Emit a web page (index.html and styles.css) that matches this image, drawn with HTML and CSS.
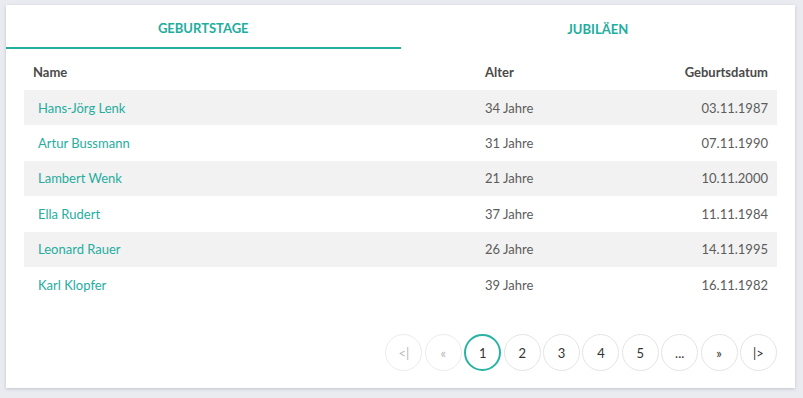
FILE: index.html
```html
<!DOCTYPE html>
<html lang="de">
<head>
<meta charset="utf-8">
<link rel="stylesheet" href="styles.css">
</head>
<body>
<div class="card">
  <div class="tabs">
    <div class="tab active">GEBURTSTAGE</div>
    <div class="tab">JUBILÄEN</div>
  </div>
  <div class="table">
    <div class="row head">
      <div class="c-name">Name</div>
      <div class="c-age">Alter</div>
      <div class="c-date">Geburtsdatum</div>
    </div>
    <div class="row odd"><div class="c-name link">Hans-Jörg Lenk</div><div class="c-age">34 Jahre</div><div class="c-date">03.11.1987</div></div>
    <div class="row"><div class="c-name link">Artur Bussmann</div><div class="c-age">31 Jahre</div><div class="c-date">07.11.1990</div></div>
    <div class="row odd"><div class="c-name link">Lambert Wenk</div><div class="c-age">21 Jahre</div><div class="c-date">10.11.2000</div></div>
    <div class="row"><div class="c-name link">Ella Rudert</div><div class="c-age">37 Jahre</div><div class="c-date">11.11.1984</div></div>
    <div class="row odd"><div class="c-name link">Leonard Rauer</div><div class="c-age">26 Jahre</div><div class="c-date">14.11.1995</div></div>
    <div class="row"><div class="c-name link">Karl Klopfer</div><div class="c-age">39 Jahre</div><div class="c-date">16.11.1982</div></div>
  </div>
  <div class="pager">
    <span class="pg disabled">&lt;|</span>
    <span class="pg disabled">«</span>
    <span class="pg current">1</span>
    <span class="pg">2</span>
    <span class="pg">3</span>
    <span class="pg">4</span>
    <span class="pg">5</span>
    <span class="pg">...</span>
    <span class="pg">»</span>
    <span class="pg">|&gt;</span>
  </div>
</div>
</body>
</html>
```
FILE: styles.css
```css
html, body {
  margin: 0;
  padding: 0;
}
body {
  background: #e9ebf1;
  font-family: Lato, "Open Sans", sans-serif;
  width: 803px;
  height: 398px;
  overflow: hidden;
}
.card {
  margin: 5px 8px 0 6px;
  height: 383px;
  background: #fff;
  box-shadow: 0 1px 3px rgba(120, 125, 140, 0.35);
  box-sizing: border-box;
}
.tabs {
  display: flex;
  height: 44px;
}
.tab {
  flex: 1;
  display: flex;
  align-items: center;
  justify-content: center;
  color: #22ad9e;
  font-weight: 700;
  font-size: 13px;
  letter-spacing: 0;
  padding-top: 3px;
  box-sizing: border-box;
}
.tab.active {
  border-bottom: 2px solid #22ad9e;
}
.table {
  margin: 0 18px;
}
.row {
  display: grid;
  grid-template-columns: 447px 1fr 150px;
  height: 35.4px;
  align-items: center;
  font-size: 13px;
  color: #5c5c5c;
}
.row.head {
  height: 41px;
  padding-top: 5px;
  box-sizing: border-box;
  font-weight: 700;
  color: #4a4a4a;
}
.row.odd {
  background: #f2f2f2;
}
.c-name {
  padding-left: 14px;
}
.head .c-name {
  padding-left: 9px;
}
.c-age {
  padding-left: 14px;
}
.c-date {
  text-align: right;
  padding-right: 9px;
}
.link {
  color: #26ad9f;
}
.pager {
  display: flex;
  justify-content: flex-end;
  gap: 2.4px;
  margin: 32px 18px 0 0;
}
.pg {
  width: 37px;
  height: 37px;
  box-sizing: border-box;
  border: 1px solid #e4e4e4;
  border-radius: 50%;
  display: flex;
  align-items: center;
  justify-content: center;
  font-size: 13px;
  color: #333;
}
.pg.disabled {
  color: #b8b8b8;
  border-color: #ececec;
}
.pg.current {
  border: 2px solid #2ab3a4;
}
```
